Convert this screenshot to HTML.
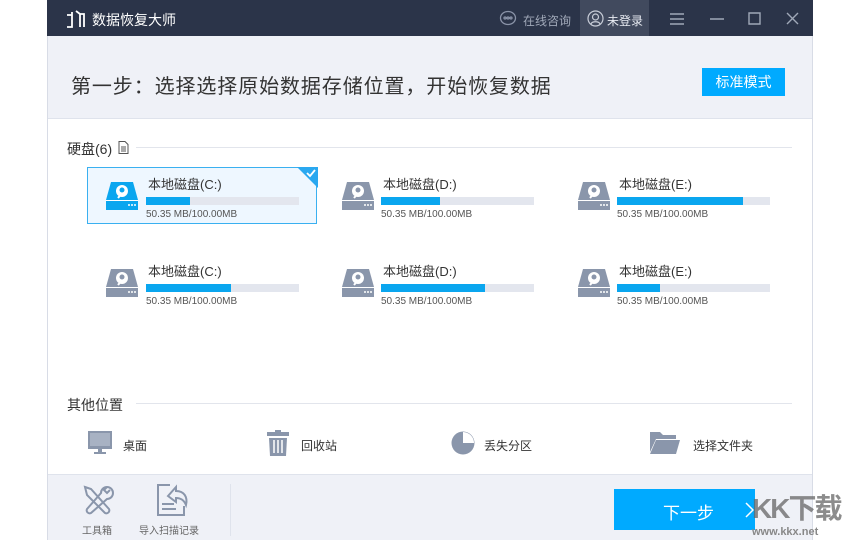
<!DOCTYPE html>
<html><head><meta charset="utf-8"><style>
*{margin:0;padding:0;box-sizing:border-box}
html,body{width:860px;height:540px;overflow:hidden}
body{background:#fff;position:relative;font-family:"Liberation Sans","Noto Sans CJK SC",sans-serif;color:#333}
.a{position:absolute;white-space:nowrap}
.win{left:47px;top:0;width:766px;height:540px;background:#fff;border-left:1px solid #d8dce6;border-right:1px solid #d8dce6}
.title{left:47px;top:0;width:766px;height:36px;background:#2b3449}
.hdr{left:48px;top:36px;width:764px;height:83px;background:#eff1f7;border-bottom:1px solid #dfe3ec}
.ftr{left:48px;top:474px;width:764px;height:66px;background:#eff1f7;border-top:1px solid #dfe3ec}
.card{width:230px;height:57px}
.card.sel{background:#eef7ff;border:1px solid #3ab0f0}
.dn{font-size:13px;color:#333}
.bar{width:153px;height:8px;background:#e3e6ee}
.bar i{display:block;height:8px;background:#0aa6ef}
.sz{font-size:10px;color:#555}
.ot{font-size:12px;color:#333}
</style></head><body>
<div class="a win"></div>
<div class="a title"></div>
<svg class="a" style="left:64px;top:9px" width="22" height="20" viewBox="0 0 22 20" fill="none" stroke="#fff" stroke-width="1.8"><path d="M3 6h5v12H3M8 3v15M12 2l4 3v13M16 5h4v13"/></svg>
<div class="a" style="left:92px;top:10px;color:#fff;font-size:14px">数据恢复大师</div>
<svg class="a" style="left:499px;top:10px" width="18" height="17" viewBox="0 0 18 17" fill="none" stroke="#8a93a8" stroke-width="1.3"><ellipse cx="9" cy="8" rx="7.5" ry="6.5"/><circle cx="6" cy="8" r="1"/><circle cx="9" cy="8" r="1"/><circle cx="12" cy="8" r="1"/></svg>
<div class="a" style="left:523px;top:12px;color:#a0a8b8;font-size:12px">在线咨询</div>
<div class="a" style="left:580px;top:0;width:69px;height:36px;background:#414a5e"></div>
<svg class="a" style="left:587px;top:10px" width="17" height="17" viewBox="0 0 17 17" fill="none" stroke="#c8cdd8" stroke-width="1.2"><circle cx="8.5" cy="8.5" r="7.5"/><circle cx="8.5" cy="7" r="3"/><path d="M4 14c1-3 8-3 9 0"/></svg>
<div class="a" style="left:607px;top:12px;color:#e8ebf2;font-size:12px">未登录</div>
<svg class="a" style="left:670px;top:12px" width="130" height="14" viewBox="0 0 130 14" stroke="#a0a8b8" stroke-width="1.4" fill="none"><path d="M0 2h14M0 7h14M0 12h14M40 7h14M79 1h11v11H79zM117 1l11 11M128 1l-11 11"/></svg>
<div class="a hdr"></div>
<div class="a" style="left:71px;top:70px;font-size:20px;letter-spacing:0.9px;color:#333">第一步：选择选择原始数据存储位置，开始恢复数据</div>
<div class="a" style="left:702px;top:68px;width:83px;height:28px;background:#00aaff;color:#fff;font-size:14px;text-align:center;line-height:28px">标准模式</div>
<div class="a" style="left:67px;top:139px;font-size:14px">硬盘(6)</div>
<svg class="a" style="left:118px;top:141px" width="11" height="13" viewBox="0 0 11 13" fill="none" stroke="#555" stroke-width="1"><path d="M1 .5h6l3 3v9H1zM3 6h5M3 8h5M3 10h5"/></svg>
<div class="a" style="left:136px;top:147px;width:656px;height:1px;background:#e2e5ec"></div>

<div class="a card sel" style="left:87px;top:167px"></div>
<svg class="a" style="left:297px;top:167px" width="21" height="21" viewBox="0 0 21 21"><path d="M0 0h21v21z" fill="#2aa8f0"/><path d="M10 6l3 3 5-6" stroke="#fff" stroke-width="1.8" fill="none"/></svg>

<div class="a" style="left:104px;top:181px"><svg width="36" height="30" viewBox="0 0 36 30"><path d="M7 1h22l5 18v10H2V19z" fill="#0aa6ef"/><rect x="2" y="19" width="32" height="1" fill="#fff"/><circle cx="18" cy="10" r="6" fill="#fff"/><circle cx="18" cy="9" r="2.5" fill="#0aa6ef"/><path d="M18 12l-4 5" stroke="#fff" stroke-width="2"/><circle cx="25" cy="24" r="1" fill="#fff"/><circle cx="28" cy="24" r="1" fill="#fff"/><circle cx="31" cy="24" r="1" fill="#fff"/></svg></div>
<div class="a dn" style="left:148px;top:174px">本地磁盘(C:)</div>
<div class="a bar" style="left:146px;top:197px"><i style="width:44px"></i></div>
<div class="a sz" style="left:146px;top:209px">50.35 MB/100.00MB</div>

<div class="a" style="left:340px;top:181px"><svg width="36" height="30" viewBox="0 0 36 30"><path d="M7 1h22l5 18v10H2V19z" fill="#8a96ab"/><rect x="2" y="19" width="32" height="1" fill="#fff"/><circle cx="18" cy="10" r="6" fill="#fff"/><circle cx="18" cy="9" r="2.5" fill="#8a96ab"/><path d="M18 12l-4 5" stroke="#fff" stroke-width="2"/><circle cx="25" cy="24" r="1" fill="#fff"/><circle cx="28" cy="24" r="1" fill="#fff"/><circle cx="31" cy="24" r="1" fill="#fff"/></svg></div>
<div class="a dn" style="left:383px;top:174px">本地磁盘(D:)</div>
<div class="a bar" style="left:381px;top:197px"><i style="width:59px"></i></div>
<div class="a sz" style="left:381px;top:209px">50.35 MB/100.00MB</div>

<div class="a" style="left:576px;top:181px"><svg width="36" height="30" viewBox="0 0 36 30"><path d="M7 1h22l5 18v10H2V19z" fill="#8a96ab"/><rect x="2" y="19" width="32" height="1" fill="#fff"/><circle cx="18" cy="10" r="6" fill="#fff"/><circle cx="18" cy="9" r="2.5" fill="#8a96ab"/><path d="M18 12l-4 5" stroke="#fff" stroke-width="2"/><circle cx="25" cy="24" r="1" fill="#fff"/><circle cx="28" cy="24" r="1" fill="#fff"/><circle cx="31" cy="24" r="1" fill="#fff"/></svg></div>
<div class="a dn" style="left:619px;top:174px">本地磁盘(E:)</div>
<div class="a bar" style="left:617px;top:197px"><i style="width:126px"></i></div>
<div class="a sz" style="left:617px;top:209px">50.35 MB/100.00MB</div>

<div class="a" style="left:104px;top:268px"><svg width="36" height="30" viewBox="0 0 36 30"><path d="M7 1h22l5 18v10H2V19z" fill="#8a96ab"/><rect x="2" y="19" width="32" height="1" fill="#fff"/><circle cx="18" cy="10" r="6" fill="#fff"/><circle cx="18" cy="9" r="2.5" fill="#8a96ab"/><path d="M18 12l-4 5" stroke="#fff" stroke-width="2"/><circle cx="25" cy="24" r="1" fill="#fff"/><circle cx="28" cy="24" r="1" fill="#fff"/><circle cx="31" cy="24" r="1" fill="#fff"/></svg></div>
<div class="a dn" style="left:148px;top:261px">本地磁盘(C:)</div>
<div class="a bar" style="left:146px;top:284px"><i style="width:85px"></i></div>
<div class="a sz" style="left:146px;top:296px">50.35 MB/100.00MB</div>

<div class="a" style="left:340px;top:268px"><svg width="36" height="30" viewBox="0 0 36 30"><path d="M7 1h22l5 18v10H2V19z" fill="#8a96ab"/><rect x="2" y="19" width="32" height="1" fill="#fff"/><circle cx="18" cy="10" r="6" fill="#fff"/><circle cx="18" cy="9" r="2.5" fill="#8a96ab"/><path d="M18 12l-4 5" stroke="#fff" stroke-width="2"/><circle cx="25" cy="24" r="1" fill="#fff"/><circle cx="28" cy="24" r="1" fill="#fff"/><circle cx="31" cy="24" r="1" fill="#fff"/></svg></div>
<div class="a dn" style="left:383px;top:261px">本地磁盘(D:)</div>
<div class="a bar" style="left:381px;top:284px"><i style="width:104px"></i></div>
<div class="a sz" style="left:381px;top:296px">50.35 MB/100.00MB</div>

<div class="a" style="left:576px;top:268px"><svg width="36" height="30" viewBox="0 0 36 30"><path d="M7 1h22l5 18v10H2V19z" fill="#8a96ab"/><rect x="2" y="19" width="32" height="1" fill="#fff"/><circle cx="18" cy="10" r="6" fill="#fff"/><circle cx="18" cy="9" r="2.5" fill="#8a96ab"/><path d="M18 12l-4 5" stroke="#fff" stroke-width="2"/><circle cx="25" cy="24" r="1" fill="#fff"/><circle cx="28" cy="24" r="1" fill="#fff"/><circle cx="31" cy="24" r="1" fill="#fff"/></svg></div>
<div class="a dn" style="left:619px;top:261px">本地磁盘(E:)</div>
<div class="a bar" style="left:617px;top:284px"><i style="width:43px"></i></div>
<div class="a sz" style="left:617px;top:296px">50.35 MB/100.00MB</div>

<div class="a" style="left:67px;top:395px;font-size:14px">其他位置</div>
<div class="a" style="left:136px;top:403px;width:656px;height:1px;background:#e2e5ec"></div>

<svg class="a" style="left:88px;top:431px" width="24" height="24" viewBox="0 0 24 24" fill="#8a96ab"><rect x="0" y="0" width="24" height="18"/><rect x="2" y="2" width="20" height="13" fill="#a8b2c3"/><rect x="10" y="18" width="4" height="3"/><rect x="6" y="21" width="12" height="2"/></svg>
<div class="a ot" style="left:123px;top:437px">桌面</div>
<svg class="a" style="left:267px;top:430px" width="22" height="26" viewBox="0 0 22 26" fill="#8a96ab"><rect x="8" y="0" width="6" height="2"/><rect x="0" y="2" width="22" height="4"/><path d="M2 8h18l-1 18H3z"/><path d="M7 10v13M11 10v13M15 10v13" stroke="#fff" stroke-width="1.5"/></svg>
<div class="a ot" style="left:301px;top:437px">回收站</div>
<svg class="a" style="left:451px;top:431px" width="24" height="24" viewBox="0 0 24 24"><circle cx="12" cy="12" r="11.5" fill="#8a96ab"/><path d="M12 12V1A11 11 0 0 1 23 12z" fill="#fff"/></svg>
<div class="a ot" style="left:484px;top:437px">丢失分区</div>
<svg class="a" style="left:650px;top:432px" width="30" height="22" viewBox="0 0 30 22" fill="#8a96ab"><path d="M0 0h10l3 3h13v4H6L0 20z"/><path d="M6 8h24l-4 14H0z"/></svg>
<div class="a ot" style="left:693px;top:437px">选择文件夹</div>

<div class="a ftr"></div>
<svg class="a" style="left:81px;top:483px" width="34" height="33" viewBox="0 0 34 33" fill="none" stroke="#8a96ab" stroke-width="2"><path d="M4 4l6 2 18 20a3 3 0 0 1-4 4L6 12zM20 10a6 6 0 1 1 6 6L10 30a3 3 0 0 1-4-4zM26 4l-3 3 3 3 3-3"/></svg>
<div class="a" style="left:82px;top:522px;font-size:10px;color:#666">工具箱</div>
<svg class="a" style="left:156px;top:484px" width="34" height="32" viewBox="0 0 34 32" fill="none" stroke="#8a96ab" stroke-width="2"><path d="M14 1H2v30h26V22M6 20h12M6 25h14"/><path d="M12 12l8-9v4c8 0 12 6 10 14-2-5-5-7-10-7v4z"/></svg>
<div class="a" style="left:139px;top:522px;font-size:10px;color:#666">导入扫描记录</div>
<div class="a" style="left:230px;top:484px;width:1px;height:52px;background:#dfe3ec"></div>
<div class="a" style="left:614px;top:489px;width:141px;height:41px;background:#00aaff"></div>
<div class="a" style="left:663px;top:499px;color:#fff;font-size:17px">下一步</div>
<svg class="a" style="left:744px;top:502px" width="10" height="16" viewBox="0 0 10 16" fill="none" stroke="#fff" stroke-width="1.5"><path d="M2 1l7 7-7 7"/></svg>
<div class="a" style="left:752px;top:487px;font-size:28px;font-weight:bold;color:#666;opacity:.75;letter-spacing:-2px">KK下载</div>
<div class="a" style="left:752px;top:526px;font-size:11px;font-weight:bold;color:#888">www.kkx.net</div>
</body></html>
